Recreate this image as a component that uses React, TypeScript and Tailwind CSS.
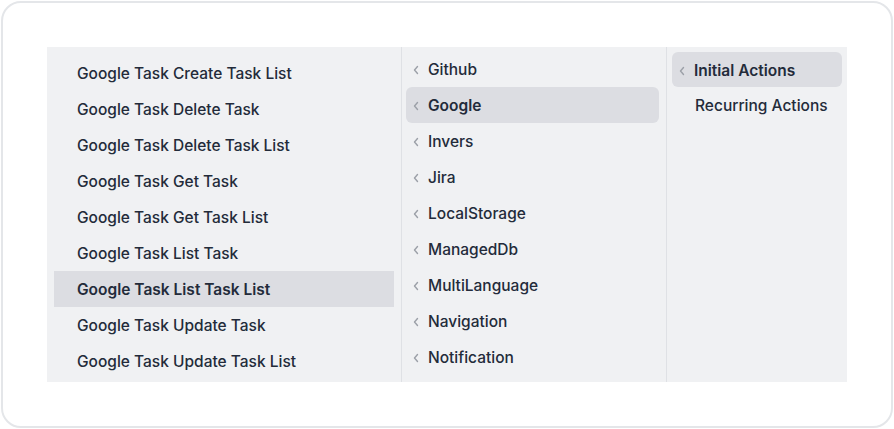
import React from "react";

const col1 = [
  "Google Task Create Task List",
  "Google Task Delete Task",
  "Google Task Delete Task List",
  "Google Task Get Task",
  "Google Task Get Task List",
  "Google Task List Task",
  "Google Task List Task List",
  "Google Task Update Task",
  "Google Task Update Task List",
];
const col2 = [
  "Github",
  "Google",
  "Invers",
  "Jira",
  "LocalStorage",
  "ManagedDb",
  "MultiLanguage",
  "Navigation",
  "Notification",
];

function Chevron() {
  return (
    <svg width="8" height="10" viewBox="0 0 8 10" className="shrink-0 text-[#9ca0a8]">
      <path d="M5.5 1.5 L2.5 5 L5.5 8.5" fill="none" stroke="currentColor" strokeWidth="1.4" strokeLinecap="round" strokeLinejoin="round" />
    </svg>
  );
}

export default function App() {
  return (
    <div className="w-[894px] h-[429px] bg-white p-px" style={{ fontFamily: "Inter, 'Noto Sans', sans-serif" }}>
      <div className="w-full h-full rounded-[20px] border-2 border-[#e4e6e9] bg-white pt-[44px] pl-[44px] pr-[44px]">
        <div className="flex h-[335px] w-[800px] bg-[#f0f1f3] overflow-hidden text-[15.5px] text-[#232b3a]">
          <div className="w-[355px] shrink-0 border-r border-[#dfe1e5] pt-2 px-[7px]">
            {col1.map((t, i) => (
              <div
                key={t}
                className={
                  "h-9 flex items-center pl-[23px] pt-[2px] " +
                  (i === 6 ? "bg-[#dcdde2] font-semibold" : "font-medium")
                }
              >
                {t}
              </div>
            ))}
          </div>
          <div className="w-[265px] shrink-0 border-r border-[#dfe1e5] pt-1 pl-1 pr-[7px]">
            {col2.map((t, i) => (
              <div
                key={t}
                className={
                  "h-9 flex items-center gap-[8px] pl-[6px] rounded-md pt-[2px] " +
                  (i === 1 ? "bg-[#dcdde2] font-semibold" : "font-medium")
                }
              >
                <Chevron />
                <span>{t}</span>
              </div>
            ))}
          </div>
          <div className="flex-1 pt-[5px] px-[5px]">
            <div className="h-[35px] flex items-center gap-[8px] pl-[6px] pt-[2px] rounded-md bg-[#dcdde2] font-semibold">
              <Chevron />
              <span>Initial Actions</span>
            </div>
            <div className="h-9 flex items-center pl-[23px] pt-[2px] font-medium">Recurring Actions</div>
          </div>
        </div>
      </div>
    </div>
  );
}
